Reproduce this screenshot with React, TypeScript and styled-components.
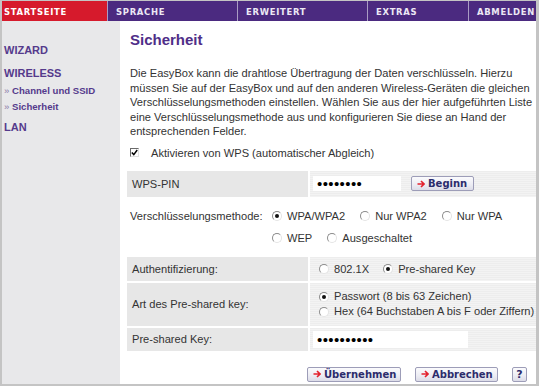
import React from 'react'
import styled, { createGlobalStyle } from 'styled-components';

const GlobalStyle = createGlobalStyle`
	html, body {
		margin: 0;
		padding: 0;
		background: #fff;
	}
	body {
		font-family: 'Liberation Sans', Arial, sans-serif;
	}
`;

const Frame = styled.div`
	width: 539px;
	height: 386px;
	box-sizing: border-box;
	border-style: solid;
	border-color: #c4c4c4;
	border-width: 1px 3px 2px 2px;
	display: flex;
	flex-direction: column;
	background: #fff;
	overflow: hidden;
`;

const NavBar = styled.div`
	display: flex;
	height: 20px;
	flex-shrink: 0;
	background: #4b2a80;
`;

const NavItem = styled.div<{ $active?: boolean; $width: number }>`
	width: ${p => p.$width}px;
	box-sizing: border-box;
	display: flex;
	align-items: center;
	padding-left: ${p => p.$active ? 2 : 8}px;
	background: ${p => p.$active ? '#d61a2c' : '#4b2a80'};
	border-left: ${p => p.$active ? 'none' : '1px solid #a99cc4'};
	color: ${p => p.$active ? '#fff' : '#ece8f4'};
	font-family: 'DejaVu Sans Condensed', 'Liberation Sans', sans-serif;
	font-weight: bold;
	font-size: 9.4px;
	letter-spacing: 0.7px;
	white-space: nowrap;
	overflow: hidden;
`;

const Body = styled.div`
	flex: 1;
	display: flex;
	min-height: 0;
`;

const Sidebar = styled.div`
	width: 118px;
	flex-shrink: 0;
	background: #e8e8ea;
	padding: 22px 0 0 2px;
	box-sizing: border-box;
	display: flex;
	flex-direction: column;
`;

const SideHeading = styled.div<{ $top: number }>`
	margin-top: ${p => p.$top}px;
	font-size: 11px;
	line-height: 14px;
	font-weight: bold;
	color: #553a8c;
`;

const SideLink = styled.div<{ $top: number }>`
	margin-top: ${p => p.$top}px;
	font-size: 9.6px;
	line-height: 16px;
	font-weight: bold;
	color: #553a8c;

	span {
		color: #8a7aa8;
		font-weight: normal;
	}
`;

const Main = styled.div`
	flex: 1;
	padding: 10px 0 0 7px;
	display: flex;
	flex-direction: column;
	color: #333;
	font-size: 11.1px;
`;

const Title = styled.h1`
	margin: 0 0 0 3px;
	font-size: 15px;
	line-height: 18px;
	font-weight: bold;
	color: #4f2e88;
`;

const Intro = styled.p`
	margin: 17px 0 0 3px;
	line-height: 14.5px;
	white-space: nowrap;
`;

const CheckRow = styled.div`
	margin: 7px 0 0 3px;
	display: flex;
	align-items: center;
	gap: 12px;
	height: 14px;
`;

const CheckBox = styled.span`
	width: 9px;
	height: 9px;
	box-sizing: border-box;
	border-style: solid;
	border-width: 1px;
	border-color: #6a6a6a #e0e0e0 #e0e0e0 #6a6a6a;
	background: #fff;
	display: flex;
	align-items: center;
	justify-content: center;
`;

const FormGrid = styled.div`
	display: grid;
	grid-template-columns: 181px 1fr;
	column-gap: 2px;
	row-gap: 2px;
`;

const LabelCell = styled.div<{ $h: number }>`
	height: ${p => p.$h}px;
	background: #e7e7e7;
	padding-left: 5px;
	display: flex;
	align-items: center;
`;

const ValueCell = styled.div<{ $h: number }>`
	height: ${p => p.$h}px;
	padding-left: 3px;
	display: flex;
	align-items: center;
	gap: 10px;
	background: repeating-linear-gradient(180deg, #ededed 0px, #ededed 1px, #f3f3f3 1px, #f3f3f3 2px);
`;

const OptionCell = styled(ValueCell)`
	padding-left: 9px;
	gap: 0;
`;

const StackCell = styled(ValueCell)`
	padding-left: 9px;
	flex-direction: column;
	align-items: flex-start;
	justify-content: center;
	gap: 0;
`;

const Secret = styled.div<{ $w: number; $h: number }>`
	width: ${p => p.$w}px;
	height: ${p => p.$h}px;
	background: #fff;
	display: flex;
	align-items: center;
	padding-left: 4px;
	box-sizing: border-box;
	font-size: 15px;
	letter-spacing: 0.4px;
	color: #000;
	font-family: 'Liberation Sans', Arial, sans-serif;
	line-height: 1;
`;

const FirstWps = styled.div`
	margin-top: 11px;
`;

const MethodBlock = styled.div`
	display: flex;
	padding: 8px 0 8px 3px;
`;

const MethodLabel = styled.div`
	width: 142px;
	flex-shrink: 0;
	line-height: 22px;
`;

const MethodOptions = styled.div`
	display: flex;
	flex-wrap: wrap;
	column-gap: 15px;
	flex: 1;
`;

const Option = styled.label<{ $lh?: number }>`
	display: flex;
	align-items: center;
	gap: 5px;
	line-height: ${p => p.$lh ?? 22}px;
	white-space: nowrap;
`;

const InlineOption = styled(Option)`
	margin-right: 14px;
`;

const Radio = styled.span<{ $on?: boolean }>`
	width: 10px;
	height: 10px;
	box-sizing: border-box;
	border-radius: 50%;
	border-style: solid;
	border-width: 1px;
	border-color: #8c8c8c #e4e4e4 #e4e4e4 #8c8c8c;
	background: #fff;
	display: flex;
	align-items: center;
	justify-content: center;
	flex-shrink: 0;

	&::after {
		content: '';
		display: ${p => p.$on ? 'block' : 'none'};
		width: 4px;
		height: 4px;
		border-radius: 50%;
		background: #111;
	}
`;

const ButtonRow = styled.div`
	margin-top: 16px;
	display: flex;
	justify-content: flex-end;
	align-items: center;
	gap: 14px;
	padding-right: 9px;
`;

const Button = styled.button<{ $w?: number }>`
	height: 15px;
	width: ${p => p.$w ? `${p.$w}px` : 'auto'};
	box-sizing: border-box;
	padding: 0 5px;
	border: 1px solid #9d9db8;
	border-radius: 2px;
	background: linear-gradient(180deg, #fbfbfd 0%, #ececf3 60%, #dcdce8 100%);
	display: flex;
	align-items: center;
	gap: 3px;
	font-family: 'DejaVu Sans', Verdana, sans-serif;
	font-weight: bold;
	font-size: 10px;
	letter-spacing: 0;
	color: #2c2c6c;
	cursor: pointer;
	white-space: nowrap;

	svg {
		flex-shrink: 0;
	}
`;

const HelpButton = styled(Button)`
	width: 15px;
	padding: 0;
	justify-content: center;
	font-size: 11px;
`;

const Arrow = () => (
	<svg width="8" height="8" viewBox="0 0 8 8">
		<path d="M0.5 4 H7 M4 1 L7 4 L4 7" stroke="#e3222e" strokeWidth="1.6" fill="none" />
	</svg>
);

const Tick = () => (
	<svg width="7" height="7" viewBox="0 0 7 7">
		<path d="M0.8 3.4 L2.8 5.6 L6.2 1" stroke="#000" strokeWidth="1.5" fill="none" />
	</svg>
);

const navItems = [
	{ label: 'STARTSEITE', width: 105, active: true },
	{ label: 'SPRACHE', width: 130 },
	{ label: 'ERWEITERT', width: 130 },
	{ label: 'EXTRAS', width: 101 },
	{ label: 'ABMELDEN', width: 68 },
];

const methods = [
	{ label: 'WPA/WPA2', on: true },
	{ label: 'Nur WPA2' },
	{ label: 'Nur WPA' },
	{ label: 'WEP' },
	{ label: 'Ausgeschaltet' },
];

export default function App() {
	return (
		<>
			<GlobalStyle />
			<Frame>
				<NavBar>
					{navItems.map(item => (
						<NavItem key={item.label} $active={item.active} $width={item.width}>{item.label}</NavItem>
					))}
				</NavBar>
				<Body>
					<Sidebar>
						<SideHeading $top={0}>WIZARD</SideHeading>
						<SideHeading $top={9}>WIRELESS</SideHeading>
						<SideLink $top={3}><span>»</span> Channel und SSID</SideLink>
						<SideLink $top={0}><span>»</span> Sicherheit</SideLink>
						<SideHeading $top={5}>LAN</SideHeading>
					</Sidebar>
					<Main>
						<Title>Sicherheit</Title>
						<Intro>
							Die EasyBox kann die drahtlose Übertragung der Daten verschlüsseln. Hierzu<br />
							müssen Sie auf der EasyBox und auf den anderen Wireless-Geräten die gleichen<br />
							Verschlüsselungsmethoden einstellen. Wählen Sie aus der hier aufgeführten Liste<br />
							eine Verschlüsselungsmethode aus und konfigurieren Sie diese an Hand der<br />
							entsprechenden Felder.
						</Intro>
						<CheckRow>
							<CheckBox><Tick /></CheckBox>
							Aktivieren von WPS (automatischer Abgleich)
						</CheckRow>
						<FirstWps>
							<FormGrid>
								<LabelCell $h={26}>WPS-PIN</LabelCell>
								<ValueCell $h={26}>
									<Secret $w={88} $h={15}>••••••••</Secret>
									<Button $w={63}><Arrow />Beginn</Button>
								</ValueCell>
							</FormGrid>
						</FirstWps>
						<MethodBlock>
							<MethodLabel>Verschlüsselungsmethode:</MethodLabel>
							<MethodOptions>
								{methods.map(m => (
									<Option key={m.label}><Radio $on={m.on} />{m.label}</Option>
								))}
							</MethodOptions>
						</MethodBlock>
						<FormGrid>
							<LabelCell $h={24}>Authentifizierung:</LabelCell>
							<OptionCell $h={24}>
								<InlineOption><Radio />802.1X</InlineOption>
								<Option><Radio $on />Pre-shared Key</Option>
							</OptionCell>
							<LabelCell $h={43}>Art des Pre-shared key:</LabelCell>
							<StackCell $h={43}>
								<Option $lh={15}><Radio $on />Passwort (8 bis 63 Zeichen)</Option>
								<Option $lh={15}><Radio />Hex (64 Buchstaben A bis F oder Ziffern)</Option>
							</StackCell>
							<LabelCell $h={23}>Pre-shared Key:</LabelCell>
							<ValueCell $h={23}>
								<Secret $w={155} $h={17}>••••••••••</Secret>
							</ValueCell>
						</FormGrid>
						<ButtonRow>
							<Button $w={94}><Arrow />Übernehmen</Button>
							<Button $w={83}><Arrow />Abbrechen</Button>
							<HelpButton>?</HelpButton>
						</ButtonRow>
					</Main>
				</Body>
			</Frame>
		</>
	);
}
